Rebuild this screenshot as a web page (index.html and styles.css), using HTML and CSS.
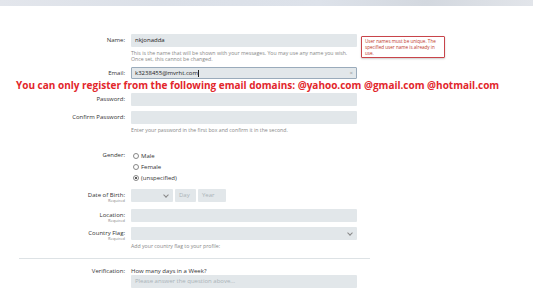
FILE: index.html
```html
<!DOCTYPE html>
<html lang="en">
<head>
    <meta charset="UTF-8">
    <title>Register</title>
    <link rel="stylesheet" href="styles.css">
</head>
<body>
    <div class="banner"></div>

    <form class="register-form">
        <div class="row name-row">
            <label class="label">Name:</label>
            <div class="field">
                <div class="input filled">nkjonadda</div>
                <p class="hint">This is the name that will be shown with your messages. You may use any name you wish.</p>
                <p class="hint next">Once set, this cannot be changed.</p>
            </div>
            <div class="error-tip">User names must be unique. The specified user name is already in use.</div>
        </div>

        <div class="row email-row">
            <label class="label">Email:</label>
            <div class="field">
                <div class="input active">k3238455@mvrht.com<span class="caret"></span><span class="clear">&times;</span></div>
            </div>
        </div>

        <p class="domain-warning">You can only register from the following email domains: @yahoo.com @gmail.com @hotmail.com</p>

        <div class="row password-row">
            <label class="label">Password:</label>
            <div class="field">
                <div class="input"></div>
            </div>
        </div>

        <div class="row confirm-row">
            <label class="label">Confirm Password:</label>
            <div class="field">
                <div class="input"></div>
                <p class="hint">Enter your password in the first box and confirm it in the second.</p>
            </div>
        </div>

        <div class="row gender-row">
            <label class="label">Gender:</label>
            <div class="field radios">
                <div class="radio"><span class="circle"></span>Male</div>
                <div class="radio"><span class="circle"></span>Female</div>
                <div class="radio"><span class="circle checked"></span>(unspecified)</div>
            </div>
        </div>

        <div class="row dob-row">
            <div class="label">
                <label>Date of Birth:</label>
                <span class="required">Required</span>
            </div>
            <div class="field dob">
                <div class="input select month"><span class="chevron"></span></div>
                <div class="input day placeholder">Day</div>
                <div class="input year placeholder">Year</div>
            </div>
        </div>

        <div class="row location-row">
            <div class="label">
                <label>Location:</label>
                <span class="required">Required</span>
            </div>
            <div class="field">
                <div class="input"></div>
            </div>
        </div>

        <div class="row flag-row">
            <div class="label">
                <label>Country Flag:</label>
                <span class="required">Required</span>
            </div>
            <div class="field">
                <div class="input select"><span class="chevron"></span></div>
                <p class="hint">Add your country flag to your profile:</p>
            </div>
        </div>

        <hr class="divider">

        <div class="row verify-row">
            <label class="label">Verification:</label>
            <div class="field">
                <div class="question">How many days in a Week?</div>
                <div class="input placeholder">Please answer the question above...</div>
            </div>
        </div>
    </form>
</body>
</html>
```

FILE: styles.css
```css
body {
    margin: 0;
    padding: 0;
    background-color: #fff;
    font-family: "Open Sans", "Noto Sans", sans-serif;
    font-size: 6px;
    color: #333;
}

.banner {
    height: 6px;
    background: linear-gradient(90deg, #e3e6ec 0%, #dbe0e8 30%, #dde2ea 60%, #d3d8df 80%, #e2e5ea 100%);
}

.register-form {
    padding-top: 28px;
}

.row {
    display: flex;
    position: relative;
}

.label {
    width: 125px;
    height: 13px;
    text-align: right;
    line-height: 13px;
    flex-shrink: 0;
}

.label label {
    display: block;
    line-height: 13px;
}

.label .required {
    display: block;
    font-size: 4px;
    line-height: 4px;
    color: #888;
    margin-top: -3px;
}

.field {
    width: 226px;
    margin-left: 6px;
}

.input {
    height: 13px;
    box-sizing: border-box;
    background-color: #e2e7ea;
    border-radius: 1px;
    padding: 0 4px;
    line-height: 13px;
    color: #222;
    position: relative;
}

.input.active {
    height: 12px;
    line-height: 10px;
    border: 1px solid #9aabbb;
    padding: 0 3px;
}

.caret {
    display: inline-block;
    width: 1px;
    height: 7px;
    background-color: #222;
    vertical-align: middle;
}

.clear {
    position: absolute;
    right: 3px;
    top: 0;
    color: #999;
    font-size: 6px;
}

.placeholder {
    color: #aab3b8;
}

.hint {
    margin: 3px 0 0;
    font-size: 5.2px;
    line-height: 6.4px;
    color: #888;
}

.hint.next {
    margin-top: 0;
}

.error-tip {
    position: absolute;
    left: 361px;
    top: 2px;
    width: 76px;
    padding: 1px 3px;
    border: 1px solid #c8444a;
    border-radius: 1px;
    box-shadow: 0 1px 2px rgba(0, 0, 0, 0.2);
    font-size: 4.6px;
    line-height: 6px;
    color: #c0392b;
    background-color: #fff;
}

.email-row {
    margin-top: 4px;
}

.domain-warning {
    margin: 0 0 0 16px;
    font-size: 10px;
    font-weight: bold;
    line-height: 11px;
    color: #e2262b;
    white-space: nowrap;
}

.password-row {
    margin-top: 2px;
}

.confirm-row {
    margin-top: 5px;
}

.gender-row {
    margin-top: 17px;
}

.gender-row .label {
    line-height: 11px;
}

.radio {
    display: flex;
    align-items: center;
    height: 11px;
    color: #333;
}

.circle {
    width: 4px;
    height: 4px;
    border: 1px solid #888;
    border-radius: 50%;
    margin: 0 2px 0 2px;
    position: relative;
    background-color: #fff;
}

.circle.checked::after {
    content: "";
    position: absolute;
    left: 1px;
    top: 1px;
    width: 2px;
    height: 2px;
    border-radius: 50%;
    background-color: #222;
}

.dob-row {
    margin-top: 6px;
}

.dob {
    display: flex;
    gap: 2px;
}

.dob .month {
    width: 42px;
}

.dob .day {
    width: 21px;
}

.dob .year {
    width: 28px;
}

.chevron {
    position: absolute;
    right: 5px;
    top: 4px;
    width: 3px;
    height: 3px;
    border-right: 1px solid #888;
    border-bottom: 1px solid #888;
    transform: rotate(45deg);
}

.location-row {
    margin-top: 7px;
}

.flag-row {
    margin-top: 5px;
}

.divider {
    margin: 8px 0 0 19px;
    width: 351px;
    border: 0;
    border-top: 1px solid #dde2e5;
}

.verify-row {
    margin-top: 9px;
}

.verify-row .label {
    line-height: 7px;
}

.question {
    line-height: 7px;
    color: #333;
}
```
